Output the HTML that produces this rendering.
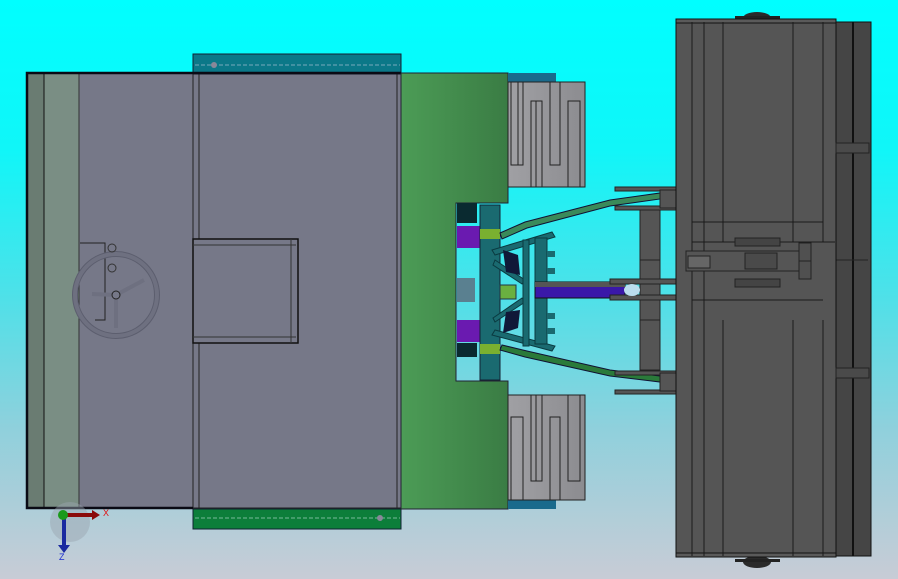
<!DOCTYPE html>
<html><head><meta charset="utf-8"><style>
html,body{margin:0;padding:0;width:898px;height:579px;overflow:hidden;background:linear-gradient(#00ffff 0px,#10f6f8 150px,#50e0e8 300px,#90d0dc 430px,#c8ccd6 579px);font-family:"Liberation Sans",sans-serif}
svg{position:absolute;left:0;top:0}
</style></head><body>
<svg width="898" height="579" viewBox="0 0 898 579">
<defs>
<linearGradient id="gr" x1="0" x2="1"><stop offset="0" stop-color="#4c9c56"/><stop offset="1" stop-color="#3a7c44"/></linearGradient>
<linearGradient id="tn" x1="0" x2="1"><stop offset="0" stop-color="#a0a0a4"/><stop offset="1" stop-color="#8c8c90"/></linearGradient>
</defs>
<rect x="27" y="73" width="17" height="435" fill="#6a7c72"/>
<rect x="44" y="73" width="35" height="435" fill="#7a8e84"/>
<rect x="79" y="73" width="114" height="435" fill="#767888"/>
<line x1="44" y1="73" x2="44" y2="508" stroke="#111" stroke-width="1"/>
<line x1="79" y1="73" x2="79" y2="508" stroke="#333" stroke-width="1"/>
<!-- handwheel -->
<path d="M80 243 H105 V320 H95" fill="none" stroke="#222"/>
<g fill="none" stroke="#5c5e6e" stroke-width="6">
<circle cx="116" cy="295" r="41"/>
</g>
<g fill="none" stroke="#6e7080" stroke-width="4">
<circle cx="116" cy="295" r="41"/>
<path d="M116 295 L144 280 M116 295 L116 328 M116 295 L92 294"/>
</g>
<circle cx="116" cy="295" r="4" fill="#767888" stroke="#222"/>
<circle cx="112" cy="248" r="4" fill="none" stroke="#333"/>
<circle cx="112" cy="268" r="4" fill="none" stroke="#333"/>
<rect x="193" y="73" width="208" height="435" fill="#767888" stroke="#222"/>
<line x1="199" y1="73" x2="199" y2="508" stroke="#222"/>
<line x1="397" y1="73" x2="397" y2="508" stroke="#222"/>
<rect x="193" y="239" width="105" height="104" fill="#767888" stroke="#111" stroke-width="1.5"/>
<line x1="193" y1="245" x2="296" y2="245" stroke="#333"/>
<line x1="193" y1="337" x2="296" y2="337" stroke="#333"/>
<line x1="291" y1="239" x2="291" y2="343" stroke="#333"/>
<rect x="193" y="54" width="208" height="20" fill="#0b7888" stroke="#123"/>
<line x1="195" y1="65" x2="400" y2="65" stroke="#7ab" stroke-dasharray="4 2"/>
<circle cx="214" cy="65" r="3" fill="#889" />
<rect x="193" y="509" width="208" height="20" fill="#0c7e3a" stroke="#123"/>
<line x1="195" y1="518" x2="400" y2="518" stroke="#7b9" stroke-dasharray="4 2"/>
<circle cx="380" cy="518" r="3" fill="#889"/>
<path d="M401 73 H27 V508 H193" fill="none" stroke="#0a0a14" stroke-width="2.5"/>
<path d="M401 73 H508 V203 H456 V381 H508 V509 H401 Z" fill="url(#gr)" stroke="#223" stroke-width="1"/>
<rect x="508" y="73" width="48" height="9" fill="#1a6a8c"/>
<path d="M508 98 L520 84 L527 84 L508 108Z" fill="#1a6a8c"/>
<rect x="508" y="82" width="77" height="105" fill="url(#tn)" stroke="#222"/>
<g fill="none" stroke="#222">
<rect x="511" y="82" width="12" height="83"/><rect x="531" y="101" width="11" height="86"/><rect x="550" y="82" width="10" height="83"/><rect x="568" y="101" width="12" height="86"/>
<line x1="536" y1="101" x2="536" y2="187"/><line x1="518" y1="82" x2="518" y2="165"/>
</g>
<rect x="508" y="500" width="48" height="9" fill="#1a6a8c"/>
<rect x="508" y="395" width="77" height="105" fill="url(#tn)" stroke="#222"/>
<g fill="none" stroke="#222">
<rect x="511" y="417" width="12" height="83"/><rect x="531" y="395" width="11" height="86"/><rect x="550" y="417" width="10" height="83"/><rect x="568" y="395" width="12" height="86"/>
<line x1="536" y1="395" x2="536" y2="481"/>
</g>
<rect x="457" y="203" width="20" height="20" fill="#0a2a30"/>
<rect x="457" y="226" width="25" height="22" fill="#6a1ab0"/>
<rect x="457" y="320" width="25" height="22" fill="#6a1ab0"/>
<rect x="457" y="343" width="20" height="14" fill="#0a2a30"/>
<rect x="457" y="278" width="18" height="24" fill="#5a8090"/>
<rect x="480" y="205" width="20" height="175" fill="#1a6a70" stroke="#123"/>
<rect x="480" y="229" width="20" height="10" fill="#7ab030"/>
<rect x="480" y="344" width="20" height="10" fill="#7ab030"/>
<g fill="#1a6a70" stroke="#0a3a40">
<path d="M492 250 L552 232 L555 237 L495 255Z"/>
<path d="M492 335 L552 351 L555 346 L495 330Z"/>
<path d="M495 260 L525 280 L522 284 L493 265Z"/>
<path d="M495 322 L525 302 L522 298 L493 318Z"/>
<rect x="523" y="240" width="6" height="106"/>
<rect x="535" y="238" width="12" height="106"/>
</g>
<rect x="547" y="251" width="8" height="6" fill="#1a6a70"/><rect x="547" y="268" width="8" height="6" fill="#1a6a70"/>
<rect x="547" y="313" width="8" height="6" fill="#1a6a70"/><rect x="547" y="328" width="8" height="6" fill="#1a6a70"/>
<path d="M503 250 L518 255 L520 275 L506 272Z" fill="#101838"/>
<path d="M503 333 L518 328 L520 310 L506 312Z" fill="#101838"/>
<rect x="500" y="285" width="16" height="14" fill="#6ab040" stroke="#234"/>
<rect x="535" y="282" width="90" height="16" fill="#3a18a8" stroke="#111"/>
<rect x="535" y="282" width="90" height="5" fill="#555"/>
<path d="M500 233 L525 222 L610 200 L660 193 L660 199 L610 206 L527 228 L502 239Z" fill="#3a8a5a" stroke="#113"/>
<path d="M500 350 L525 357 L610 376 L660 382 L660 376 L610 370 L527 351 L502 345Z" fill="#2a7a3a" stroke="#113"/>
<rect x="640" y="210" width="20" height="160" fill="#555" stroke="#222"/>
<line x1="640" y1="260" x2="660" y2="260" stroke="#222"/><line x1="640" y1="320" x2="660" y2="320" stroke="#222"/>
<g fill="#555" stroke="#222">
<rect x="615" y="187" width="75" height="4"/><rect x="615" y="206" width="75" height="4"/>
<rect x="615" y="371" width="75" height="4"/><rect x="615" y="390" width="75" height="4"/>
<rect x="610" y="279" width="80" height="5"/><rect x="610" y="295" width="80" height="5"/>
</g>
<rect x="660" y="190" width="32" height="18" fill="#555" stroke="#222"/>
<rect x="660" y="373" width="32" height="18" fill="#555" stroke="#222"/>
<ellipse cx="632" cy="290" rx="8" ry="6" fill="#bde"/>
<ellipse cx="757" cy="18" rx="14" ry="6" fill="#2a2a2a"/>
<rect x="735" y="16" width="45" height="3" fill="#222"/>
<ellipse cx="757" cy="562" rx="14" ry="6" fill="#2a2a2a"/>
<rect x="735" y="559" width="45" height="3" fill="#222"/>
<rect x="836" y="22" width="35" height="534" fill="#454545" stroke="#111"/>
<line x1="853" y1="22" x2="853" y2="556" stroke="#111" stroke-width="2"/>
<line x1="836" y1="260" x2="868" y2="260" stroke="#222"/>
<rect x="676" y="20" width="160" height="537" fill="#555" stroke="#111"/>
<rect x="676" y="19" width="160" height="4" fill="#5a5a5a" stroke="#111"/>
<rect x="676" y="553" width="160" height="4" fill="#5a5a5a" stroke="#111"/>
<g stroke="#1a1a1a" stroke-width="1">
<line x1="692" y1="22" x2="692" y2="556"/><line x1="704" y1="22" x2="704" y2="556"/>
<line x1="723" y1="22" x2="723" y2="242"/><line x1="723" y1="320" x2="723" y2="556"/>
<line x1="793" y1="22" x2="793" y2="242"/><line x1="793" y1="320" x2="793" y2="556"/>
<line x1="823" y1="22" x2="823" y2="242"/><line x1="823" y1="320" x2="823" y2="556"/>
<line x1="692" y1="222" x2="823" y2="222"/><line x1="692" y1="300" x2="823" y2="300"/>
<line x1="692" y1="242" x2="835" y2="242"/>
</g>
<rect x="735" y="238" width="45" height="8" fill="#444" stroke="#222"/>
<rect x="735" y="279" width="45" height="8" fill="#444" stroke="#222"/>
<rect x="686" y="251" width="115" height="20" fill="#555" stroke="#222"/>
<rect x="745" y="253" width="32" height="16" fill="#4a4a4a" stroke="#222"/>
<rect x="688" y="256" width="22" height="12" fill="#666" stroke="#222"/>
<rect x="799" y="243" width="12" height="36" fill="#505050" stroke="#222"/>
<line x1="799" y1="261" x2="811" y2="261" stroke="#222"/>
<rect x="836" y="143" width="33" height="10" fill="#4a4a4a" stroke="#222"/>
<rect x="836" y="368" width="33" height="10" fill="#4a4a4a" stroke="#222"/>
<circle cx="70" cy="522" r="20" fill="#9aa4b0" opacity="0.45"/>
<rect x="62" y="518" width="4" height="28" fill="#1a2aa0"/>
<path d="M58 545 L70 545 L64 553Z" fill="#1a2aa0"/>
<rect x="64" y="513" width="28" height="4" fill="#8a0a0a"/>
<path d="M92 510 L100 515 L92 520Z" fill="#8a0a0a"/>
<circle cx="63" cy="515" r="5" fill="#1a9a1a"/>
<text x="103" y="516" font-size="9" fill="#e01010">X</text>
<text x="59" y="560" font-size="9" fill="#1a2ad0">Z</text>
</svg>
</body></html>
